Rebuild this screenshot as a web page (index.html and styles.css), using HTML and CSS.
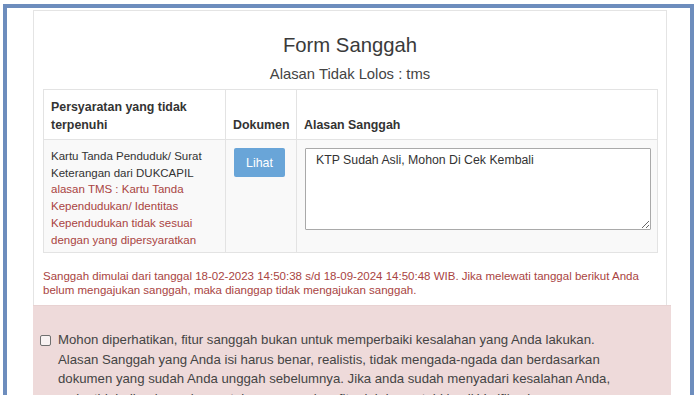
FILE: index.html
```html
<!DOCTYPE html>
<html lang="id">
<head>
<meta charset="utf-8">
<title>Form Sanggah</title>
<link rel="stylesheet" href="styles.css">
</head>
<body>
<div class="frame">
  <div class="card">
    <h2 class="title">Form Sanggah</h2>
    <h4 class="subtitle">Alasan Tidak Lolos : tms</h4>
    <table class="tbl">
      <thead>
        <tr>
          <th class="c1">Persyaratan yang tidak<br>terpenuhi</th>
          <th class="c2">Dokumen</th>
          <th class="c3">Alasan Sanggah</th>
        </tr>
      </thead>
      <tbody>
        <tr>
          <td class="req">Kartu Tanda Penduduk/ Surat<br>Keterangan dari DUKCAPIL<br><span class="danger">alasan TMS : Kartu Tanda<br>Kependudukan/ Identitas<br>Kependudukan tidak sesuai<br>dengan yang dipersyaratkan</span></td>
          <td><button class="btn" type="button">Lihat</button></td>
          <td><textarea class="ta">KTP Sudah Asli, Mohon Di Cek Kembali</textarea></td>
        </tr>
      </tbody>
    </table>
    <p class="note">Sanggah dimulai dari tanggal 18-02-2023 14:50:38 s/d 18-09-2024 14:50:48 WIB. Jika melewati tanggal berikut Anda<br>belum mengajukan sanggah, maka dianggap tidak mengajukan sanggah.</p>
  </div>
  <div class="alert">
    <label class="check">
      <span class="box"></span>
      <span class="txt">Mohon diperhatikan, fitur sanggah bukan untuk memperbaiki kesalahan yang Anda lakukan. Alasan Sanggah yang Anda isi harus benar, realistis, tidak mengada-ngada dan berdasarkan dokumen yang sudah Anda unggah sebelumnya. Jika anda sudah menyadari kesalahan Anda, maka tidak diperkenankan untuk menggunakan fitur ini dan patuhi hasil Verifikasi.</span>
    </label>
  </div>
</div>
</body>
</html>
```
FILE: styles.css
```css
html, body {
  margin: 0;
  padding: 0;
  background: #ffffff;
  overflow: hidden;
}
body {
  font-family: "Liberation Sans", Arial, Helvetica, sans-serif;
  color: #333333;
}
.frame {
  margin: 4px 6px 0 3px;
  border: 4px solid #6d8dbd;
  border-bottom: none;
  min-height: 430px;
  padding: 2px 0 0 26px;
  background: #ffffff;
}
.card {
  margin-right: 23px;
  border: 1px solid #e4e4e4;
  border-bottom: none;
  padding: 0 9px 8px 9px;
  background: #ffffff;
}
.title {
  margin: 22px 0 0 0;
  font-size: 20.3px;
  line-height: 24px;
  font-weight: normal;
  text-align: center;
  color: #3a3a3a;
}
.subtitle {
  margin: 8px 0 0 0;
  font-size: 14.8px;
  line-height: 18px;
  font-weight: normal;
  text-align: center;
  color: #444444;
}
.tbl {
  margin-top: 6px;
  width: 614px;
  border-collapse: collapse;
  table-layout: fixed;
}
.c1 { width: 182px; }
.c2 { width: 71px; }
.c3 { width: 361px; }
.tbl th, .tbl td {
  border: 1px solid #e3e3e3;
  text-align: left;
  box-sizing: border-box;
}
.tbl th {
  font-size: 12.4px;
  line-height: 17.5px;
  font-weight: bold;
  color: #333333;
  padding: 9px 7px 5px 7px;
  vertical-align: bottom;
  background: #ffffff;
  white-space: nowrap;
}
.tbl td {
  font-size: 11.5px;
  line-height: 16.7px;
  padding: 8px 7px 4px 7px;
  vertical-align: top;
  background: #f9f9f9;
  color: #333333;
}
.req {
  white-space: nowrap;
}
.danger {
  color: #a94442;
}
.btn {
  display: block;
  width: 51px;
  height: 29px;
  margin-left: 1px;
  border: none;
  border-radius: 2px;
  background: #69a5d8;
  color: #ffffff;
  font-family: "Liberation Sans", Arial, sans-serif;
  font-size: 12.4px;
  padding: 0;
}
.ta {
  display: block;
  box-sizing: border-box;
  width: 346px;
  height: 82px;
  margin-left: 1px;
  border: 1px solid #a9a9a9;
  border-radius: 1px;
  background: #ffffff;
  padding: 3px 10px;
  font-family: "Liberation Sans", Arial, sans-serif;
  font-size: 12.3px;
  line-height: 17px;
  color: #333333;
}
.note {
  margin: 16px 0 0 0;
  font-size: 11.5px;
  line-height: 14px;
  color: #a94442;
  white-space: nowrap;
}
.alert {
  margin-right: 19px;
  min-height: 120px;
  background: #eedada;
  border-top: 1px solid #e8d2d2;
  padding: 24px 0 0 7px;
}
.check {
  display: flex;
  align-items: flex-start;
  gap: 7px;
}
.box {
  flex: none;
  width: 9px;
  height: 9px;
  margin-top: 5px;
  border: 1px solid #6f6f6f;
  border-radius: 2px;
  background: #f8f2f2;
}
.txt {
  max-width: 574px;
  font-size: 13.2px;
  line-height: 19.5px;
  color: #444444;
}
```
